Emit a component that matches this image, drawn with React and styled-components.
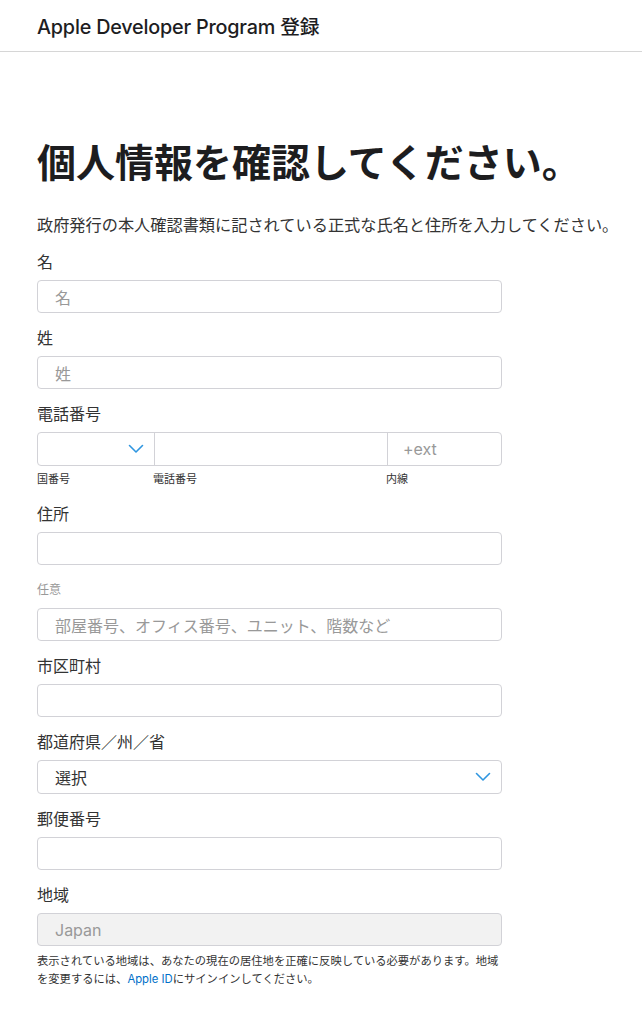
import React from "react";
import styled, { createGlobalStyle } from "styled-components";

const GlobalStyle = createGlobalStyle`
  body {
    margin: 0;
    background: #fff;
    font-family: "Inter", "Noto Sans CJK JP", sans-serif;
    color: #333;
  }
`;

const Header = styled.header`
  height: 51px;
  border-bottom: 1px solid #d6d6d6;
  display: flex;
  align-items: center;
  padding: 0 37px;
  font-size: 19.8px;
  font-weight: 500;
  color: #1d1d1f;
  letter-spacing: -0.2px;
`;

const Main = styled.main`
  padding: 88px 37px 40px;
`;

const Heading = styled.h1`
  margin: 0;
  font-size: 39px;
  line-height: 46px;
  font-weight: 700;
  color: #1d1d1f;
  white-space: nowrap;
`;

const Intro = styled.p`
  margin: 27px 0 13px;
  font-size: 16.2px;
  line-height: 24px;
  color: #333;
  white-space: nowrap;
`;

const Form = styled.form`
  width: 465px;
  display: flex;
  flex-direction: column;
`;

const Field = styled.div`
  display: flex;
  flex-direction: column;
  margin-bottom: ${({ $mb }) => $mb ?? 13}px;
`;

const Label = styled.label`
  font-size: 16px;
  line-height: 24px;
  color: ${({ $muted }) => ($muted ? "#999" : "#333")};
  margin-bottom: 6px;
  ${({ $small }) => $small && "font-size: 12px; line-height: 18px; margin-bottom: 9px;"}
`;

const Box = styled.div`
  height: ${({ $tall }) => ($tall ? 34 : 33)}px;
  box-sizing: border-box;
  border: 1px solid #d2d2d7;
  border-radius: 4px;
  background: ${({ $disabled }) => ($disabled ? "#f2f2f2" : "#fff")};
  display: flex;
  align-items: center;
  justify-content: space-between;
  padding: 0 10px 0 17px;
  font-size: 16px;
  color: ${({ $filled }) => ($filled ? "#333" : "#999")};
`;

const PhoneRow = styled.div`
  display: grid;
  grid-template-columns: 116px 233px 1fr;
  height: 34px;
  box-sizing: border-box;
  border: 1px solid #d2d2d7;
  border-radius: 4px;
`;

const Segment = styled.div`
  display: flex;
  align-items: center;
  justify-content: ${({ $end }) => ($end ? "flex-end" : "flex-start")};
  padding: 0 ${({ $end }) => ($end ? 10 : 15)}px;
  border-left: ${({ $first }) => ($first ? "none" : "1px solid #d2d2d7")};
  font-size: 16px;
  color: #999;
`;

const SubLabels = styled.div`
  display: grid;
  grid-template-columns: 116px 233px 1fr;
  margin-top: 5px;
  font-size: 11px;
  line-height: 16px;
  color: #333;
`;

const Note = styled.p`
  margin: 6px 0 0;
  font-size: 11.3px;
  line-height: 18px;
  color: #333;
`;

const Link = styled.a`
  color: #0070c9;
  text-decoration: none;
`;

const Chevron = () => (
  <svg width="16" height="10" viewBox="0 0 16 10" fill="none">
    <path d="M1.5 1.5 L8 8 L14.5 1.5" stroke="#2f96e0" strokeWidth="1.6" strokeLinecap="round" strokeLinejoin="round" />
  </svg>
);

const TextField = ({ label, placeholder = "", muted, disabled }) => (
  <Field>
    <Label $muted={muted} $small={muted}>{label}</Label>
    <Box $disabled={disabled}>{placeholder}</Box>
  </Field>
);

const App = () => (
  <>
    <GlobalStyle />
    <Header>Apple Developer Program 登録</Header>
    <Main>
      <Heading>個人情報を確認してください。</Heading>
      <Intro>政府発行の本人確認書類に記されている正式な氏名と住所を入力してください。</Intro>
      <Form>
        <TextField label="名" placeholder="名" />
        <TextField label="姓" placeholder="姓" />
        <Field $mb={15}>
          <Label>電話番号</Label>
          <PhoneRow>
            <Segment $first $end>
              <Chevron />
            </Segment>
            <Segment />
            <Segment>+ext</Segment>
          </PhoneRow>
          <SubLabels>
            <span>国番号</span>
            <span>電話番号</span>
            <span>内線</span>
          </SubLabels>
        </Field>
        <Field $mb={16}>
          <Label>住所</Label>
          <Box />
        </Field>
        <TextField label="任意" placeholder="部屋番号、オフィス番号、ユニット、階数など" muted />
        <TextField label="市区町村" />
        <Field>
          <Label>都道府県／州／省</Label>
          <Box $filled $tall>
            選択
            <Chevron />
          </Box>
        </Field>
        <TextField label="郵便番号" />
        <Field $mb={0}>
          <Label>地域</Label>
          <Box $disabled>Japan</Box>
          <Note>
            表示されている地域は、あなたの現在の居住地を正確に反映している必要があります。地域を変更するには、
            <Link href="#">Apple ID</Link>にサインインしてください。
          </Note>
        </Field>
      </Form>
    </Main>
  </>
);

export default App;
